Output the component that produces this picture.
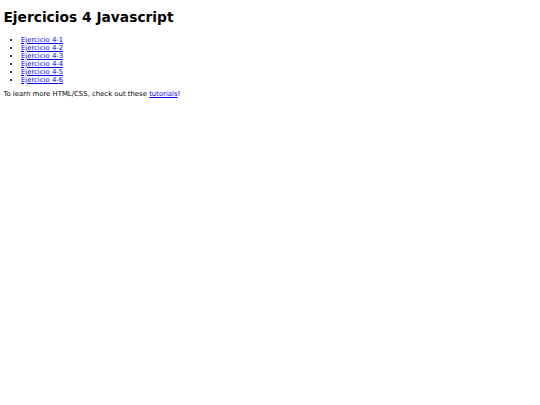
export default function App() {
  return (
    <div className="m-[3.4px] font-['DejaVu_Sans',sans-serif] text-[6.9px] leading-[normal] text-black">
      <h1 className="mt-[9px] mb-[10.5px] text-[13.8px] font-bold">Ejercicios 4 Javascript</h1>
      <ul className="list-disc pl-[17.5px]">
        {[1, 2, 3, 4, 5, 6].map((n) => (
          <li key={n}>
            <a href="#" className="text-[#0000ee] underline">
              Ejercicio 4-{n}
            </a>
          </li>
        ))}
      </ul>
      <p className="mt-[6.8px] mb-[6.9px]">
        To learn more HTML/CSS, check out these{" "}
        <a href="#" className="text-[#0000ee] underline">
          tutorials
        </a>
        !
      </p>
    </div>
  );
}
